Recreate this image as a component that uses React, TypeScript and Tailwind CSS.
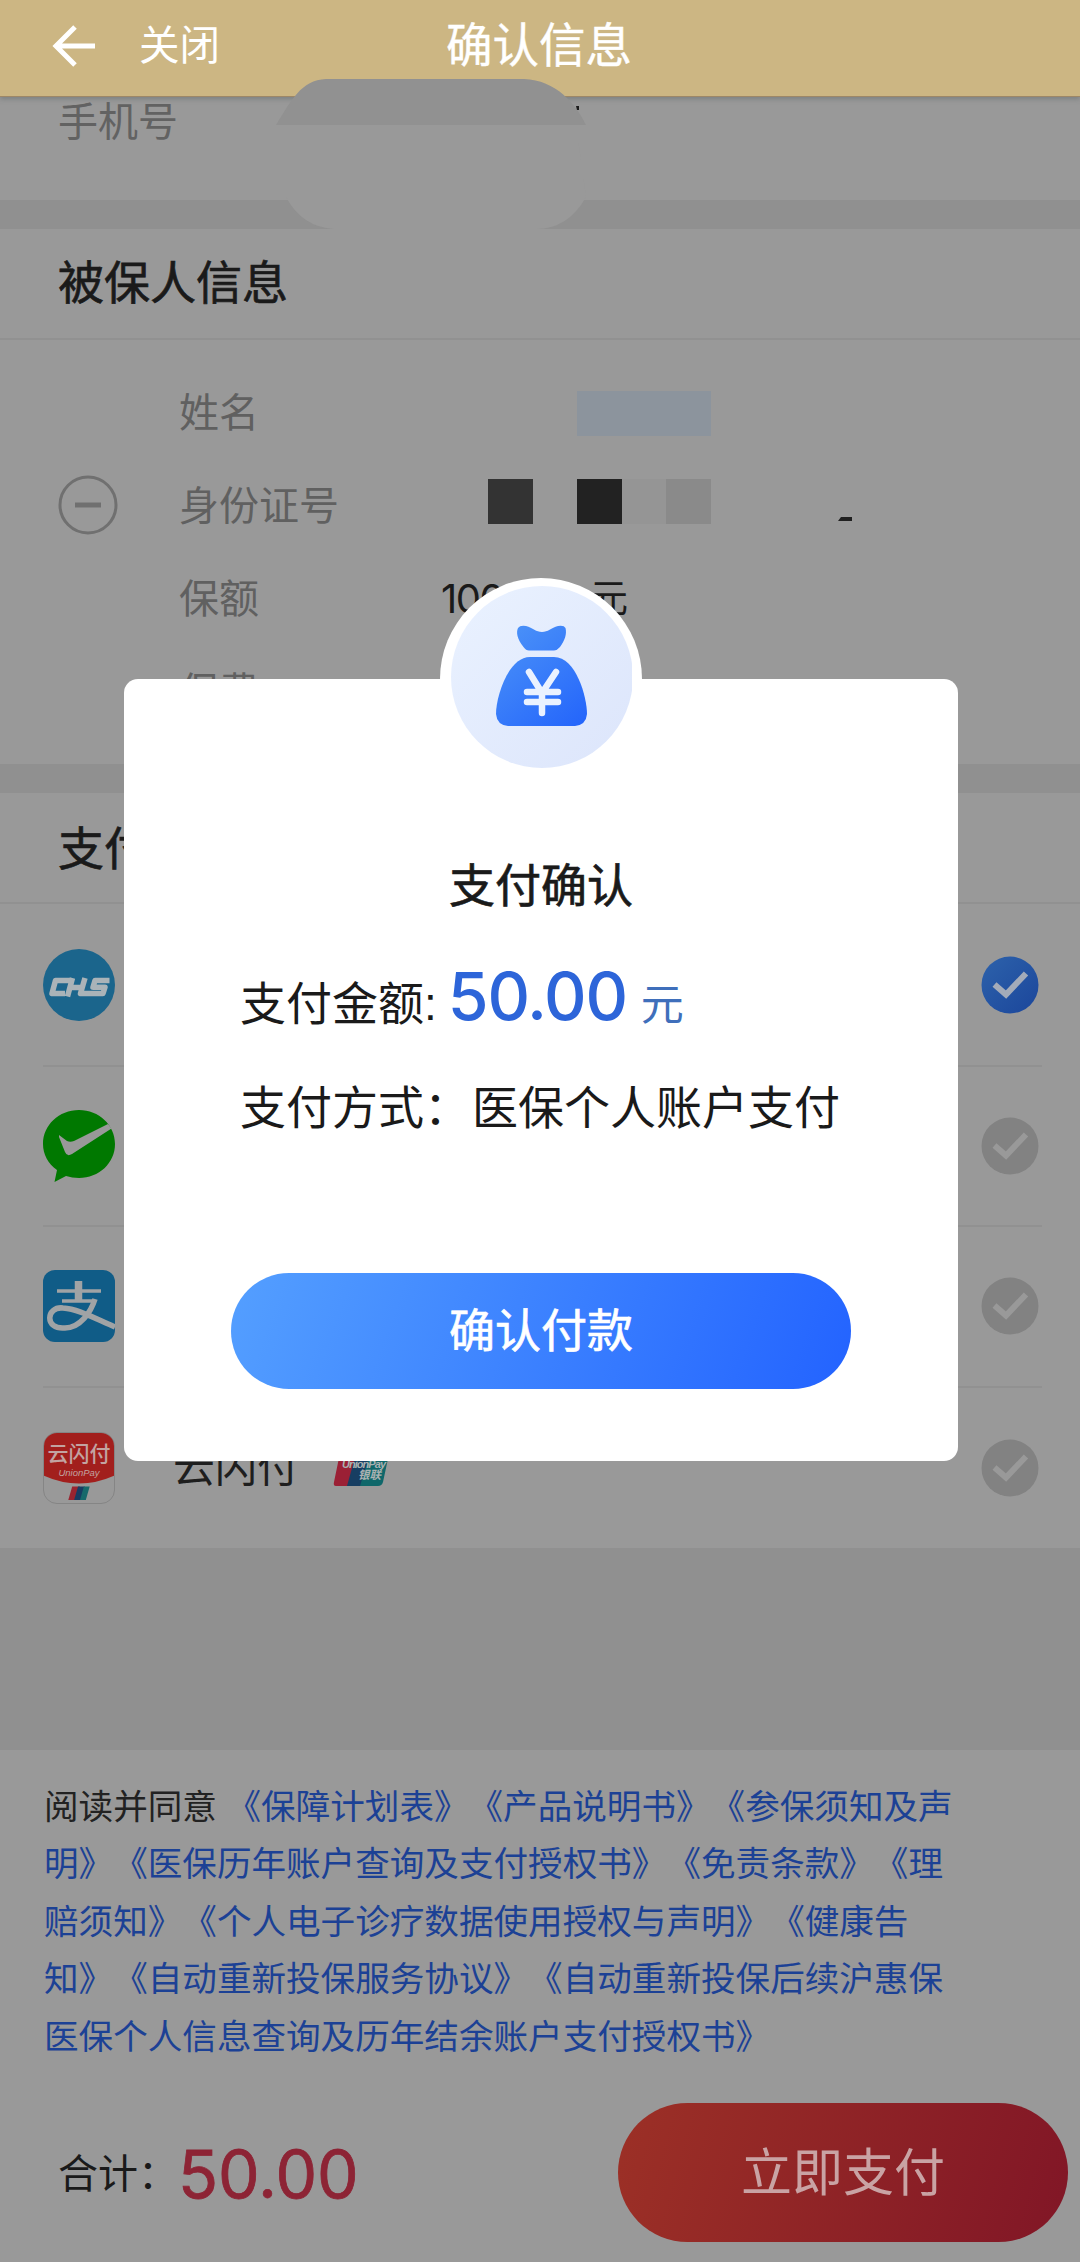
import type { ReactNode } from "react";

const font = "font-['Liberation_Sans','Noto_Sans_CJK_SC',sans-serif] [text-spacing-trim:space-all]";

function Check({ on = false }: { on?: boolean }) {
  return (
    <svg className="size-[58px]" viewBox="0 0 58 58">
      <defs>
        <linearGradient id="chk" x1="0" y1="0" x2="1" y2="1">
          <stop offset="0" stopColor="#2d62ab" />
          <stop offset="1" stopColor="#1b469b" />
        </linearGradient>
      </defs>
      <circle cx="29" cy="29" r="28.5" fill={on ? "url(#chk)" : "#828282"} />
      <path d="M13.5 28.500L25 38.500L45 17.5" fill="none" stroke={on ? "#a3abb9" : "#999"} strokeWidth="6" />
    </svg>
  );
}

function Chs() {
  return (
    <svg className="size-[72px]" viewBox="0 0 72 72">
      <circle cx="36" cy="36" r="36" fill="#1b658c" />
      <g fill="none" stroke="#aab3b8" strokeWidth="5.5" strokeLinejoin="round">
        <path d="M27 31.500H12.500L9 44.500H22M29.500 29L24.500 47.500M27 38.500H38M42 29L37.500 44.500H45M66.500 31.500H52L50 38.200H62L60 44.500H44" />
      </g>
    </svg>
  );
}

function Wechat() {
  return (
    <svg className="size-[72px]" viewBox="0 0 72 72">
      <path d="M36 0C56 0 72 15 72 34S56 68 36 68Q29 68 23 66L11.500 72L14 60C5 54 0 44 0 34C0 15 16 0 36 0Z" fill="#007800" />
      <path d="M16 25L24 31Q27 32.500 31 31L65 14L68.500 18.500L29 44Q24 47 22 42L16 27Z" fill="#999" />
    </svg>
  );
}

function Alipay() {
  return (
    <svg className="size-[72px]" viewBox="0 0 72 72">
      <rect width="72" height="72" rx="12" fill="#105c87" />
      <g fill="none" stroke="#a0a3a5">
        <path d="M14 21H58M19 31H50" strokeWidth="3.600" />
        <path d="M35.500 11V31" strokeWidth="7.500" />
        <path d="M52 29C48 42 37 58 22 58C1 60 3 36 20 38C35 39 49 47 72 57" strokeWidth="5.500" />
      </g>
    </svg>
  );
}

function QuickPass() {
  return (
    <div className="relative flex size-[72px] flex-col items-center overflow-hidden rounded-[14px] border border-[#858585] bg-[#999]">
      <svg className="absolute inset-0 size-full" viewBox="0 0 72 72">
        <path d="M0 0H72V44Q36 60 0 44Z" fill="#a21f1d" />
        <path d="M29 55H37L33 69H25Z" fill="#9a2430" />
        <path d="M35 55H42L38 69H31Z" fill="#173c62" />
        <path d="M41 55H47L43 69H37Z" fill="#16696b" />
      </svg>
      <span className="relative mt-[7px] text-[21px] leading-[28px] font-medium whitespace-nowrap text-[#c2a3a1]">云闪付</span>
      <span className="relative text-[9.500px] leading-[9px] whitespace-nowrap text-[#c2a3a1] italic">UnionPay</span>
    </div>
  );
}

function UnionPayMark() {
  return (
    <svg className="h-[36px] w-[57px]" viewBox="0 0 57 36">
      <path d="M9 0H26L18 36H3Q0 36 1 32L7 3Q8 0 9 0Z" fill="#9b2035" />
      <path d="M24 0H42L34 36H14Z" fill="#173e62" />
      <path d="M38 0H54Q57 0 56 4L50 32Q49 36 45 36H27Z" fill="#0f676a" />
      <text x="9" y="18" fontSize="11" fontWeight="bold" fontStyle="italic" fill="#aab2b2" textLength="44">UnionPay</text>
      <text x="25" y="29" fontSize="11.500" fontWeight="bold" fontStyle="italic" fill="#aab2b2">银联</text>
    </svg>
  );
}

function MoneyBag() {
  return (
    <div className="absolute top-[-101px] left-[316px] size-[202px] rounded-full bg-white p-[10px]">
      <svg className="-mt-[2px] size-[182px]" viewBox="0 0 182 182">
        <defs>
          <linearGradient id="disc" x1="0" y1="0" x2="1" y2="1">
            <stop offset="0" stopColor="#eaf2ff" />
            <stop offset="1" stopColor="#dce5fb" />
          </linearGradient>
          <linearGradient id="bag" gradientUnits="userSpaceOnUse" x1="55" y1="45" x2="130" y2="138">
            <stop offset="0" stopColor="#4a91f8" />
            <stop offset="1" stopColor="#2566fb" />
          </linearGradient>
        </defs>
        <circle cx="92" cy="91" r="91" fill="url(#disc)" />
        <path d="M79 64.500Q76 64.500 73.500 61C67 53 66 46 68 42Q70 39 76 40C83 42 86 46 92 46S101 42 108 40Q114 39 115.500 42C117 48 115 54 110 61Q107 64.500 104 64.500Z" fill="url(#bag)" />
        <path d="M80 71H104C126 71 137 111 137 128Q136 139 125 140H58Q47 139 46 128C46 111 58 71 80 71Z" fill="url(#bag)" />
        <g fill="none" stroke="#eaf2ff" strokeWidth="6.500" strokeLinecap="round" strokeLinejoin="round">
          <path d="M79 86L92 107L106 86M92 106V127M77 106H108M77 116H108" />
        </g>
      </svg>
    </div>
  );
}

function PayRow({ icon, on, last, children }: { icon: ReactNode; on?: boolean; last?: boolean; children?: ReactNode }) {
  return (
    <div className={last ? "mr-[38px] ml-[43px] flex h-[160px] items-center pr-[3px]" : "mr-[38px] ml-[43px] flex h-[160.500px] items-center border-b-2 border-[#919191] pr-[3px]"}>
      {icon}
      <div className="ml-[58px] flex flex-1 items-center text-[42px] text-[#1e1e1e]">{children}</div>
      <Check on={on} />
    </div>
  );
}

const label = "w-[262px] text-[40px] leading-[56px] text-[#606060]";
const heading = "flex h-[111px] items-center border-b-2 border-[#919191] pl-[58px] text-[46px] [-webkit-text-stroke:0.7px]";

export default function App() {
  return (
    <div className={`${font} relative flex h-[2262px] w-[1080px] flex-col overflow-hidden bg-[#999] text-[#1a1a1a]`}>
      <header className="flex h-[97px] shrink-0 items-center border-b border-[#9d8767] bg-[#ccb683] pb-[5px] text-white shadow-[0_2px_5px_rgba(70,80,80,0.35)]">
        <svg className="ml-[52px] h-[44px] w-[44px]" viewBox="0 0 44 44" fill="none" stroke="#fff" strokeWidth="5">
          <path d="M23 3L4 22L23 41M4 22H43" />
        </svg>
        <span className="ml-[43px] w-[307px] text-[40.500px] leading-[56px]">关闭</span>
        <span className="text-[46.500px] leading-[60px] [-webkit-text-stroke:0.4px]">确认信息</span>
      </header>

      <section className="relative h-[103px] shrink-0">
        <p className="pl-[58px] text-[40px] leading-[50px] text-[#626262]">手机号</p>
        <svg className="absolute top-[-18px] left-[276px] h-[150px] w-[314px]" viewBox="0 0 314 150">
          <path d="M0 46C15 22 25 1 50 0H248C280 1 300 25 310 46Z" fill="#919191" />
          <path d="M10 46H300L310 118Q292 150 260 150H58Q26 148 10 118Z" fill="#999" />
          <path d="M300 27H303V31H301Z" fill="#1c1c1c" />
        </svg>
      </section>
      <div className="h-[29px] shrink-0 bg-[#909090]" />

      <section className="h-[535px] shrink-0">
        <h2 className={heading}>被保人信息</h2>
        <div className="flex pt-[45px]">
          <svg className="mt-[90px] ml-[58px] size-[60px]" viewBox="0 0 60 60" fill="none" stroke="#707070">
            <circle cx="30" cy="30" r="28" strokeWidth="3" />
            <path d="M17 30H43" strokeWidth="5" />
          </svg>
          <div className="ml-[61px] flex flex-col gap-[37px]">
            <div className="flex h-[56px] items-center">
              <span className={label}>姓名</span>
              <div className="ml-[136px] h-[45px] w-[134px] bg-[#8c949d]" />
            </div>
            <div className="flex h-[56px] items-center">
              <span className={label}>身份证号</span>
              <div className="mb-[10px] ml-[47px] flex h-[45px]">
                <div className="w-[45px] bg-[#333]" />
                <div className="ml-[44px] w-[45px] bg-[#222]" />
                <div className="w-[44px] bg-[#959595]" />
                <div className="w-[45px] bg-[#8a8a8a]" />
              </div>
              <svg className="mt-[26px] ml-[127px] h-[4px] w-[14px]" viewBox="0 0 14 4"><path d="M3 0H14V4H0Z" fill="#202020" /></svg>
            </div>
            <div className="flex h-[56px] items-center">
              <span className={label}>保额</span>
              <span className="w-[148px] font-['Inter'] text-[40px] tracking-[-1.500px]">100.00</span>
              <span className="text-[39px]">元</span>
            </div>
            <div className="flex h-[56px] items-center"><span className={label}>保费</span></div>
          </div>
        </div>
      </section>
      <div className="h-[29px] shrink-0 bg-[#909090]" />

      <section className="shrink-0">
        <h2 className={`${heading} pt-[4px]`}>支付方式</h2>
        <div className="pt-[2px]">
          <PayRow icon={<Chs />} on />
          <PayRow icon={<Wechat />} />
          <PayRow icon={<Alipay />} />
          <PayRow icon={<QuickPass />} last>
            <span>云闪付</span>
            <span className="ml-[34px]"><UnionPayMark /></span>
          </PayRow>
        </div>
      </section>
      <div className="h-[202px] shrink-0 bg-[#909090]" />

      <footer className="flex-1">
        <p className="pt-[29px] pl-[44px] text-[34.600px] leading-[57.600px] whitespace-nowrap text-[#1c4195]">
          <span className="text-[#222]">阅读并同意</span> 《保障计划表》《产品说明书》《参保须知及声<br />
          明》《医保历年账户查询及支付授权书》《免责条款》《理<br />
          赔须知》《个人电子诊疗数据使用授权与声明》《健康告<br />
          知》《自动重新投保服务协议》《自动重新投保后续沪惠保<br />
          医保个人信息查询及历年结余账户支付授权书》
        </p>
        <div className="mt-[36px] flex h-[140px] items-center pr-[12px] pl-[58px]">
          <span className="w-[120px] pt-[3px] text-[40px]">合计：</span>
          <span className="flex-1 pt-[4px] font-['Inter'] text-[66px] text-[#8d2435] [-webkit-text-stroke:0.8px]">50.00</span>
          <button className="h-[139px] w-[450px] rounded-full bg-linear-[105deg] from-[#9c3026] to-[#811626] pt-[3px] text-[51px] text-[#c9a3a4]">立即支付</button>
        </div>
      </footer>

      <div className="absolute top-[679px] left-[124px] flex h-[782px] w-[834px] flex-col rounded-[14px] bg-white">
        <MoneyBag />
        <h3 className="mt-[174px] text-center text-[46px] leading-[66px] [-webkit-text-stroke:0.7px]">支付确认</h3>
        <p className="mt-[39px] flex items-baseline pl-[116px] text-[46px] leading-[76px]">
          支付金额:
          <span className="ml-[11px] font-['Inter'] text-[66px] font-medium tracking-[-1.200px] text-[#2d65d9]">50.00</span>
          <span className="ml-[14px] text-[43px] text-[#3f6fbb]">元</span>
        </p>
        <p className="mt-[32px] flex pl-[116px] text-[46px] leading-[66px] whitespace-nowrap">
          <span className="w-[232px]">支付方式：</span>医保个人账户支付
        </p>
        <button className="mt-[132px] ml-[107px] h-[116px] w-[620px] rounded-full bg-linear-[110deg] from-[#549fff] to-[#2363ff] text-[46px] text-white [-webkit-text-stroke:0.7px]">确认付款</button>
      </div>
    </div>
  );
}
